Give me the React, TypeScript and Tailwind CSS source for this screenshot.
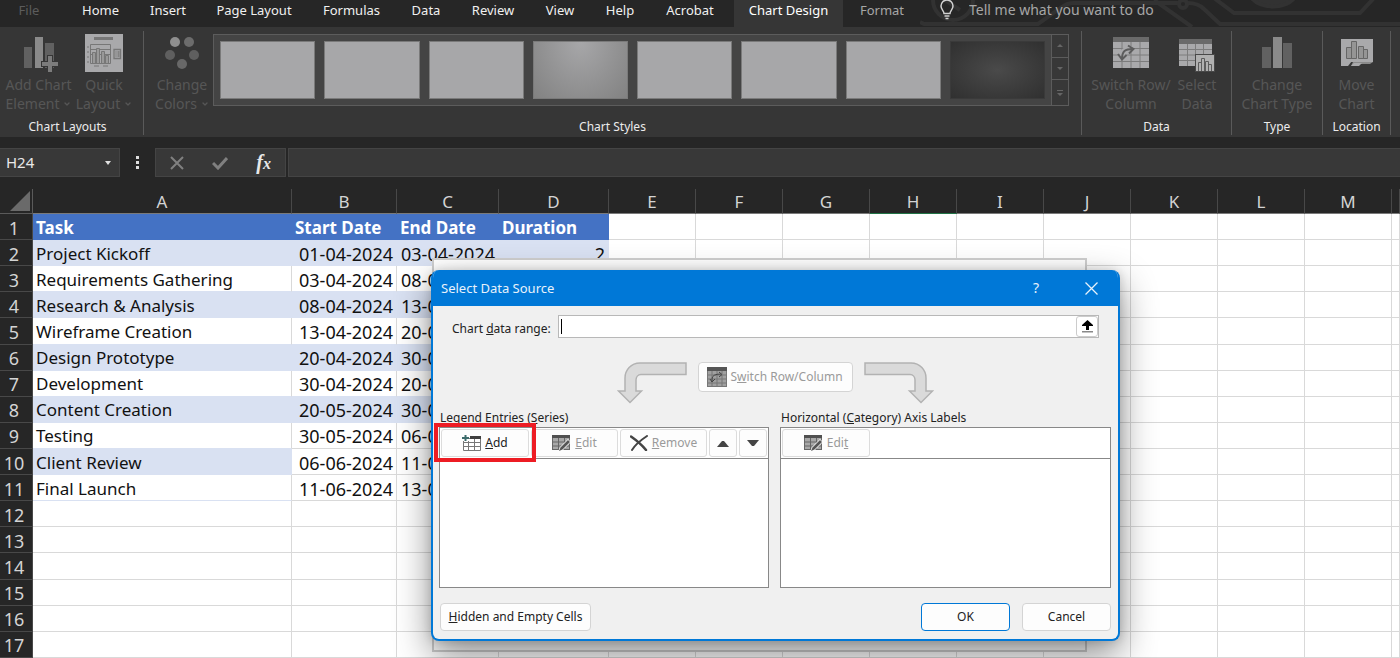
import React from 'react';
import clsx from 'clsx';
import { ChevronDown } from 'lucide-react';

const tabs = [
  { label: 'File', width: 'w-[66px] pr-2', tone: 'text-[#5c5c5c]' },
  { label: 'Home', width: 'w-[69px]', tone: 'text-[#f0f0f0]' },
  { label: 'Insert', width: 'w-[66px]', tone: 'text-[#f0f0f0]' },
  { label: 'Page Layout', width: 'w-[106px]', tone: 'text-[#f0f0f0]' },
  { label: 'Formulas', width: 'w-[89px]', tone: 'text-[#f0f0f0]' },
  { label: 'Data', width: 'w-[60px]', tone: 'text-[#f0f0f0]' },
  { label: 'Review', width: 'w-[74px]', tone: 'text-[#f0f0f0]' },
  { label: 'View', width: 'w-[60px]', tone: 'text-[#f0f0f0]' },
  { label: 'Help', width: 'w-[60px]', tone: 'text-[#f0f0f0]' },
  { label: 'Acrobat', width: 'w-[84px] pr-1', tone: 'text-[#f0f0f0]' },
  { label: 'Chart Design', width: 'w-[109px] bg-[#363636]', tone: 'text-white' },
  { label: 'Format', width: 'w-[78px]', tone: 'text-[#a6a6a6]' },
];

const columns = [
  { name: 'A', width: 'w-[259px]' },
  { name: 'B', width: 'w-[105px]' },
  { name: 'C', width: 'w-[102px]' },
  { name: 'D', width: 'w-[110px]' },
  { name: 'E', width: 'w-[87px]' },
  { name: 'F', width: 'w-[87px]' },
  { name: 'G', width: 'w-[87px]' },
  { name: 'H', width: 'w-[87px]' },
  { name: 'I', width: 'w-[87px]' },
  { name: 'J', width: 'w-[87px]' },
  { name: 'K', width: 'w-[87px]' },
  { name: 'L', width: 'w-[87px]' },
  { name: 'M', width: 'w-[87px]' },
  { name: '', width: '' },
];

const sheet = [
  ['Task', 'Start Date', 'End Date', 'Duration'],
  ['Project Kickoff', '01-04-2024', '03-04-2024', '2'],
  ['Requirements Gathering', '03-04-2024', '08-04-2024', '5'],
  ['Research & Analysis', '08-04-2024', '13-04-2024', '5'],
  ['Wireframe Creation', '13-04-2024', '20-04-2024', '7'],
  ['Design Prototype', '20-04-2024', '30-04-2024', '10'],
  ['Development', '30-04-2024', '20-05-2024', '20'],
  ['Content Creation', '20-05-2024', '30-05-2024', '10'],
  ['Testing', '30-05-2024', '06-06-2024', '7'],
  ['Client Review', '06-06-2024', '11-06-2024', '5'],
  ['Final Launch', '11-06-2024', '13-06-2024', '2'],
];

const rowNumbers = Array.from({ length: 17 }, (_, i) => i + 1);

const cellStyle = (row: number, col: number) => {
  if (row === 1 && col < 4) return 'bg-[#4472c4] border-[#4472c4] text-white text-[17px] font-bold text-left';
  const align = col > 0 ? 'text-right text-lg' : 'text-left text-[17px]';
  if (row > 11 || col > 3) return clsx(align, 'border-[#d9d9d9]');
  if (row % 2 === 0 && (row < 10 || col === 0)) return clsx(align, 'bg-[#d9e1f2] border-[#d9e1f2]');
  return clsx(align, 'border-r-[#d9d9d9]', row < 9 || col === 0 ? 'border-b-[#d9e1f2]' : 'border-b-[#d9d9d9]');
};

const AddChartIcon = () => (
  <svg width="36" height="38" viewBox="-2 0 36 38" overflow="visible">
    <path d="M1 13h8v21H1z" fill="#616161" />
    <path d="M12 3h8v31h-8z" fill="#8a8a8a" />
    <path d="M22 9h9v25h-9z" fill="#616161" />
    <path d="M24 21h6v6h6v6h-6v5h-6v-5h-6v-6h6z" fill="#363636" />
    <path d="M25 22h4v6h6v4h-6v6h-4v-6h-6v-4h6z" fill="#7c7c7c" />
  </svg>
);

const QuickLayoutIcon = () => (
  <svg width="38" height="38" viewBox="0 0 38 38" fill="none" stroke="#777" strokeWidth="1">
    <path d="M0 0h38v38H0z" fill="#a9a9ab" stroke="none" />
    <path d="M9 3h19v3H9z" fill="#777" stroke="none" />
    <path d="M5.5 10.500h20v19h-20zM5.500 15.500h20M5.500 20.500h20" />
    <path d="M7.500 18.500h3v11h-3zM11.500 14.500h3v15h-3zM16.500 17.500h3v12h-3zM20.500 21.500h3v8h-3z" fill="#999" />
    <path d="M29 15.500h6.500v9H29zM30.500 18h1m1 0h2m-4 2h1m1 0h2m-4 2h1m1 0h2" strokeWidth="1.300" />
    <path d="M2 13h2m-2 5h2m-2 5h2m-2 5h2M9 32h5m4 0h5" />
  </svg>
);

const ColorsIcon = () => (
  <svg width="36" height="38" viewBox="0 0 36 38">
    <circle cx="11" cy="8" r="5" fill="#8f8f8f" />
    <circle cx="25" cy="8" r="5" fill="#6c6c6c" />
    <circle cx="6" cy="21" r="5" fill="#5f5f5f" />
    <circle cx="30" cy="21" r="5" fill="#5f5f5f" />
    <circle cx="18" cy="30" r="5" fill="#686868" />
  </svg>
);

const SwitchIcon = () => (
  <svg width="36" height="38" viewBox="0 0 36 38">
    <path d="M0 3h36v31H0z" fill="#a9a9ab" />
    <path d="M0 3h36v5H0z" fill="#6a6a6a" />
    <path d="M0 14.500h36M0 21h36M0 27.500h36M9 8v26M18 8v26M27 8v26" stroke="#7c7c7c" />
    <path d="M9 25C9 17 12 15 20 15" stroke="#a9a9ab" strokeWidth="6" fill="none" />
    <path d="M9 25C9 17 12 15 20 15M15 11.500l5.500 3.500-4.500 4.500M5 20l4 5.500 4.500-4.500" stroke="#5c5c5c" strokeWidth="2" fill="none" />
  </svg>
);

const SelectDataIcon = () => (
  <svg width="36" height="38" viewBox="0 0 36 38">
    <path d="M0 5h33v27H0z" fill="#a9a9ab" />
    <path d="M0 5h33v5H0z" fill="#6a6a6a" />
    <path d="M0 15.500h33M0 21h33M0 26.500h33M8.500 10v22M16.500 10v22M24.500 10v22" stroke="#7c7c7c" />
    <path d="M16 20h20v18H16z" fill="#484848" />
    <path d="M17 21h18v16H17z" fill="#b0b0b0" />
    <path d="M19.500 37V28.500h3V37m0 0V24.500h3V37m1 0v-9.500h3V37m0 0v-6.500h3V37" stroke="#5c5c5c" fill="none" />
  </svg>
);

const ChartTypeIcon = () => (
  <svg width="32" height="38" viewBox="0 0 32 38">
    <path d="M1 13h9v21H1z" fill="#616161" />
    <path d="M12 3h9v31h-9z" fill="#8a8a8a" />
    <path d="M22 9h9v25h-9z" fill="#616161" />
  </svg>
);

const MoveChartIcon = () => (
  <svg width="34" height="38" viewBox="0 0 34 38">
    <path d="M1 5h32v23H1z" fill="#a9a9ab" />
    <path d="M1 27h11l-4 5H1z" fill="#a9a9ab" />
    <path d="M13 28h20l-3 2H20l-6 2-3 0z" fill="#8a8a8a" />
    <path d="M14 29h8l-3 3h-8z" fill="#a9a9ab" />
    <path d="M6.500 13.500h5v11h-5zM11.500 7.500h5v17h-5zM18.500 12.500h5v12h-5zM23.500 15.500h4v9h-4z" fill="#959595" stroke="#666" />
  </svg>
);

interface RibbonButtonProps {
  icon: React.ReactNode;
  lines: [string, string];
  menu?: boolean;
  className?: string;
}

const RibbonButton: React.FC<RibbonButtonProps> = ({ icon, lines, menu, className }) => (
  <button disabled className={clsx('flex shrink-0 flex-col items-center whitespace-nowrap text-sm leading-[19px] text-[#565656]', className)}>
    <span className="mb-[3px] flex h-[38px]">{icon}</span>
    <span>{lines[0]}</span>
    <span className="flex items-center gap-1">
      {lines[1]}
      {menu && <ChevronDown className="h-2 w-2" strokeWidth={4} />}
    </span>
  </button>
);

const RibbonGroup: React.FC<{ title: string; className: string; children: React.ReactNode }> = ({ title, className, children }) => (
  <section className={clsx('flex flex-col justify-between border-r border-[#5a5a5a]', className)}>
    <div className="flex pt-[3px]">{children}</div>
    <h2 className="text-center text-xs leading-4 text-[#ececec]">{title}</h2>
  </section>
);

const Circuit = () => (
  <svg className="absolute inset-y-0 right-0 h-[27px] w-[480px]" viewBox="0 0 480 27" fill="none" stroke="#323232" strokeWidth="4">
    <circle cx="33" cy="0" r="20" />
    <path d="M22-2l18 12M0 22l4 2h114l24-17c4-3 7-4 12-4h104M268 3c8 0 12 2 16 6l16 15h180M234 0l38 27M294-2l20 15h126l14-15" />
    <circle cx="263" cy="4" r="4" fill="#262626" />
    <path d="M330-4c10 14 36 14 46 0" fill="#323232" />
  </svg>
);

const TabBar = () => (
  <nav className="relative flex h-[27px] overflow-hidden bg-[#262626]">
    <Circuit />
    {tabs.map((tab) => (
      <button key={tab.label} className={clsx('relative h-full shrink-0 whitespace-nowrap pb-2 text-[13px] leading-5', tab.width, tab.tone)}>
        {tab.label}
      </button>
    ))}
    <label className="relative flex grow items-start gap-3 pl-4 text-sm leading-5 text-[#a6a6a6]">
      <svg width="20" height="20" viewBox="0 0 20 20" fill="none" stroke="#d0d0d0" strokeWidth="1.500">
        <path d="M7 13.500C7 11 4 9.500 4 6a6 6 0 0 1 12 0c0 3.500-3 5-3 7.500zM7.500 16h5M8.500 18.500h3" />
      </svg>
      <input className="w-60 bg-transparent outline-none placeholder:text-[#a6a6a6]" placeholder="Tell me what you want to do" aria-label="Tell me what you want to do" />
    </label>
  </nav>
);

const styleFills = [
  'bg-[#a7a7a9]',
  'bg-[#a7a7a9]',
  'bg-[#a7a7a9]',
  'bg-radial-[at_50%_0%] from-[#a7a7a9] to-[#828282]',
  'bg-[#a7a7a9]',
  'bg-[#a7a7a9]',
  'bg-[#a7a7a9]',
  'bg-radial from-[#4a4a4a] to-[#303030]',
];

const Ribbon = () => (
  <div className="flex h-[110px] bg-[#363636] pt-1 pb-[2px]">
    <RibbonGroup title="Chart Layouts" className="w-[144px] pr-2">
      <RibbonButton icon={<AddChartIcon />} lines={['Add Chart', 'Element']} menu className="w-[77px]" />
      <RibbonButton icon={<QuickLayoutIcon />} lines={['Quick', 'Layout']} menu className="w-[54px]" />
    </RibbonGroup>
    <RibbonGroup title="Chart Styles" className="min-w-0 grow">
      <RibbonButton icon={<ColorsIcon />} lines={['Change', 'Colors']} menu className="ml-[7px] w-[62px]" />
      <div className="mr-3 flex h-[72px] grow border border-[#5c5c5c] bg-[#444]">
        <div className="grid grow grid-cols-8 gap-[9px] px-[6px] py-[6px]">
          {styleFills.map((fill, i) => (
            <button key={i} aria-label={`Style ${i + 1}`} className={clsx('border', i === 7 ? 'border-[#3a3a3a]' : 'border-[#7a7a7a]', fill)} />
          ))}
        </div>
        <div className="flex w-[17px] flex-col border-l border-[#5c5c5c] bg-[#383838] text-[#666]">
          <button aria-label="Previous styles" className="flex grow items-center justify-center border-b border-[#5c5c5c]">
            <svg width="6" height="3" viewBox="0 0 6 3"><path d="M0 3l3-3 3 3z" fill="currentColor" /></svg>
          </button>
          <button aria-label="Next styles" className="flex grow items-center justify-center border-b border-[#5c5c5c]">
            <svg width="6" height="3" viewBox="0 0 6 3"><path d="M0 0l3 3 3-3z" fill="currentColor" /></svg>
          </button>
          <button aria-label="More styles" className="flex grow items-center justify-center">
            <svg width="6" height="6" viewBox="0 0 6 6"><path d="M0 3l3 3 3-3zM0 0h6v1H0z" fill="currentColor" /></svg>
          </button>
        </div>
      </div>
    </RibbonGroup>
    <RibbonGroup title="Data" className="w-[150px] shrink-0">
      <RibbonButton icon={<SwitchIcon />} lines={['Switch Row/', 'Column']} className="ml-[7px] w-[84px]" />
      <RibbonButton icon={<SelectDataIcon />} lines={['Select', 'Data']} className="w-[48px]" />
    </RibbonGroup>
    <RibbonGroup title="Type" className="w-[91px] shrink-0">
      <RibbonButton icon={<ChartTypeIcon />} lines={['Change', 'Chart Type']} className="w-full" />
    </RibbonGroup>
    <RibbonGroup title="Location" className="w-[68px] shrink-0">
      <RibbonButton icon={<MoveChartIcon />} lines={['Move', 'Chart']} className="w-full" />
    </RibbonGroup>
    <div className="w-[9px] shrink-0" />
  </div>
);

const FormulaBar = () => (
  <div className="flex h-[52px] bg-[#262626] pt-[11px] pb-3">
    <div className="flex w-[120px] shrink-0 items-center justify-between border border-l-0 border-[#444] bg-[#383838] pr-2 pl-[6px]">
      <input aria-label="Name box" defaultValue="H24" className="w-20 bg-transparent text-[15px] text-[#e8e8e8] outline-none" />
      <svg width="6" height="4" viewBox="0 0 6 4"><path d="M0 0h6L3 4z" fill="#e0e0e0" /></svg>
    </div>
    <div className="flex w-[35px] shrink-0 items-center justify-center">
      <svg width="3" height="13" viewBox="0 0 3 13"><path d="M0 0h3v3H0zM0 5h3v3H0zM0 10h3v3H0z" fill="#ddd" /></svg>
    </div>
    <div className="flex w-[131px] shrink-0 items-center justify-between border border-[#444] bg-[#383838] px-[14px]">
      <button aria-label="Cancel entry">
        <svg width="14" height="14" viewBox="0 0 14 14" fill="none" stroke="#808080" strokeWidth="2"><path d="M1 1l12 12M13 1L1 13" /></svg>
      </button>
      <button aria-label="Accept entry">
        <svg width="16" height="14" viewBox="0 0 16 14" fill="none" stroke="#808080" strokeWidth="3"><path d="M1 7l5 5 9-10" /></svg>
      </button>
      <button aria-label="Insert function" className="font-['Liberation_Serif',serif] text-xl leading-6 font-bold text-[#e8e8e8] italic">
        f<span className="text-base">x</span>
      </button>
    </div>
    <input aria-label="Formula bar" className="ml-[2px] min-w-0 grow border border-r-0 border-[#444] bg-[#383838] px-2 text-white outline-none" />
  </div>
);

const Sheet = () => (
  <div className="min-h-0 grow">
    <table className="h-full w-full table-fixed border-separate border-spacing-0 bg-white text-[17px] leading-5 text-[#111]">
      <thead>
        <tr className="h-[25px] bg-[#262626] text-[#d4d4d4]">
          <th className="w-[33px] border-r border-b border-[#5a5a5a] p-0">
            <svg className="ml-[10px]" width="20" height="20" viewBox="0 0 20 20"><path d="M20 0v20H0z" fill="#6a6a6a" /></svg>
          </th>
          {columns.map((col, i) => (
            <th key={i} className={clsx('border-r border-b border-r-[#484848] p-0 pt-[2px] font-normal', col.width, col.name === 'H' ? 'border-b-[#217346]' : 'border-b-[#7a7a7a]')}>
              {col.name}
            </th>
          ))}
        </tr>
      </thead>
      <tbody>
        {rowNumbers.map((row) => (
          <tr key={row}>
            <th className="border-r border-b border-[#484848] bg-[#262626] p-0 pt-[2px] pr-1 text-lg leading-5 font-normal text-[#d4d4d4]">{row}</th>
            {columns.map((_, c) => (
              <td key={c} className={clsx('border-r border-b px-[3px] pt-[2px] pb-0 leading-5 whitespace-nowrap', cellStyle(row, c))}>
                {sheet[row - 1]?.[c]}
              </td>
            ))}
          </tr>
        ))}
      </tbody>
    </table>
  </div>
);

const EditIcon = () => (
  <svg width="19" height="18" viewBox="0 0 19 18">
    <path d="M0 1h18v15H0z" fill="#a8a8a8" />
    <path d="M0 1h18v3H0z" fill="#505050" />
    <path d="M.5 4v12M6.500 4v12M12.500 4v12M17.500 4v12M0 8h18M0 12h18M0 15.500h18" stroke="#666" />
    <path d="M6 18l2-5 8-8 3 3-8 8z" fill="#fdfdfd" />
    <path d="M7 17l1.500-3.500L16 6l2 2-7.500 7.500z" fill="#555" />
  </svg>
);

const AddIcon = () => (
  <svg width="19" height="18" viewBox="0 0 19 18">
    <path d="M1.500 4.500h17v12h-17zM1 8.500h17M1 12.500h17M6.500 4v12M12.500 4v12" fill="#fff" stroke="#777" />
    <path d="M8 2h11v3H8z" fill="#404040" />
    <path d="M0 0h7v7H0z" fill="#fdfdfd" />
    <path d="M3.500 1v6M0 4h7" stroke="#3c6b6b" strokeWidth="2" />
  </svg>
);

const SwitchSmallIcon = () => (
  <svg width="20" height="20" viewBox="0 0 20 20">
    <path d="M0 0h20v20H0z" fill="#a0a0a0" />
    <path d="M0 0h20v4H0z" fill="#555" />
    <path d="M.5 4v16M5 4v16M10 4v16M15 4v16M19.500 4v16M0 8h20M0 12h20M0 16h20M0 19.500h20" stroke="#777" />
    <path d="M5 15V12q0-5 9-5M12 5l3 2.500-3 2.500M3 12l2 3 3-3" stroke="#444" fill="none" />
  </svg>
);

const BentArrow: React.FC<{ className?: string }> = ({ className }) => (
  <svg className={className} width="70" height="42" viewBox="0 0 70 42">
    <path d="M1 1h46c9 0 15 7 15 15v13h6.500L57 40.500 45.500 29H51V18c0-3-2-5.500-5-5.500H1z" fill="#dadada" stroke="#b2b2b2" strokeWidth="1.500" />
  </svg>
);

const toolButton = 'flex h-7 shrink-0 items-center justify-center rounded-[3px] border border-[#dcdcdc] bg-[#fdfdfd]';
const pushButton = 'flex h-7 items-center justify-center rounded border border-[#d4d4d4] bg-[#fdfdfd]';

const SelectDataDialog = () => (
  <div
    role="dialog"
    aria-label="Select Data Source"
    className="absolute top-[270px] left-[431px] flex h-[371px] w-[689px] flex-col overflow-hidden rounded-lg border-2 border-t-0 border-[#0078d7] bg-[#f0f0f0] text-xs text-[#222] shadow-[0_14px_36px_rgba(0,0,0,0.45),0_0_10px_rgba(0,0,0,0.15)]"
  >
    <header className="flex h-9 shrink-0 items-center bg-[#0078d7] pl-2 text-sm text-[#e8f2fb]">
      <h1 className="grow text-[13px]">Select Data Source</h1>
      <button className="w-14 text-sm" aria-label="Help">?</button>
      <button className="flex w-[54px] justify-center" aria-label="Close">
        <svg width="13" height="13" viewBox="0 0 13 13" stroke="#e8f2fb" strokeWidth="1.300"><path d="M.5.5l12 12M12.500.5l-12 12" /></svg>
      </button>
    </header>
    <div className="flex grow flex-col pt-[9px] pr-[7px] pb-2 pl-[6px]">
      <div className="flex items-center pr-3 pl-[13px]">
        <label htmlFor="range" className="w-[106px] shrink-0 pt-1">
          Chart <u>d</u>ata range:
        </label>
        <div className="flex h-[23px] grow border border-[#b8b8b8] bg-white">
          <span className="my-[3px] ml-[2px] w-px bg-black" />
          <input id="range" className="min-w-0 grow outline-none" />
          <button aria-label="Collapse dialog" className="flex w-[22px] items-center justify-center rounded-[3px] border border-[#ccc]">
            <svg width="11" height="13" viewBox="0 0 11 13"><path d="M5.500 0L11 5v1H7v4H4V6H0V5z" fill="#000" /><path d="M0 11h11v1.500H0z" fill="#888" /></svg>
          </button>
        </div>
      </div>
      <div className="mt-6 flex h-[42px] justify-center">
        <BentArrow className="-scale-x-100" />
        <button disabled className="mx-[11px] flex h-[30px] w-[155px] items-center justify-center gap-[3px] rounded border border-[#d4d4d4] bg-[#fdfdfd] text-[#9a9a9a]">
          <SwitchSmallIcon />
          <span>S<u>w</u>itch Row/Column</span>
        </button>
        <BentArrow />
      </div>
      <div className="mt-1 flex gap-[11px]">
        <section className="w-[330px]">
          <h2 className="h-[19px] pt-px pl-px leading-[18px]">Legend Entries (<u>S</u>eries)</h2>
          <div className="h-[161px] border border-[#888] bg-white">
            <div className="flex h-[31px] gap-[2px] border-b border-[#888] p-px">
              <div className="relative">
                <button className={clsx(toolButton, 'w-[88px] gap-1')}>
                  <AddIcon />
                  <span><u>A</u>dd</span>
                </button>
                <span className="pointer-events-none absolute -top-[6px] -left-[7px] h-[39px] w-[102px] border-4 border-[#ed1c24]" />
              </div>
              <button disabled className={clsx(toolButton, 'w-[87px] gap-1 text-[#9a9a9a]')}>
                <EditIcon />
                <span><u>E</u>dit</span>
              </button>
              <button disabled className={clsx(toolButton, 'w-[87px] gap-1 text-[#9a9a9a]')}>
                <svg width="18" height="16" viewBox="0 0 18 16" fill="none" stroke="#444" strokeLinecap="round">
                  <path d="M1 1.500C6 5 12 10 16 15" strokeWidth="2.500" />
                  <path d="M17 1C11 5 5 10 2 15" strokeWidth="2" />
                </svg>
                <span><u>R</u>emove</span>
              </button>
              <button aria-label="Move up" className={clsx(toolButton, 'w-7')}>
                <svg width="12" height="7" viewBox="0 0 12 7"><path d="M0 7l5-6h2l5 6z" fill="#444" /></svg>
              </button>
              <button aria-label="Move down" className={clsx(toolButton, 'w-7')}>
                <svg width="12" height="7" viewBox="0 0 12 7"><path d="M0 0l5 6h2l5-6z" fill="#444" /></svg>
              </button>
            </div>
          </div>
        </section>
        <section className="grow">
          <h2 className="h-[19px] pt-px pl-px leading-[18px]">Horizontal (<u>C</u>ategory) Axis Labels</h2>
          <div className="h-[161px] border border-[#888] bg-white">
            <div className="flex h-[31px] border-b border-[#888] p-px">
              <button disabled className={clsx(toolButton, 'w-[88px] gap-1 text-[#9a9a9a]')}>
                <EditIcon />
                <span>Edi<u>t</u></span>
              </button>
            </div>
          </div>
        </section>
      </div>
      <footer className="mt-auto flex gap-3">
        <button className={clsx(pushButton, 'ml-px mr-auto w-[151px]')}>
          <span><u>H</u>idden and Empty Cells</span>
        </button>
        <button className="flex h-7 w-[89px] items-center justify-center rounded border border-[#0078d7] bg-[#fdfdfd]">OK</button>
        <button className={clsx(pushButton, 'w-[89px]')}>Cancel</button>
      </footer>
    </div>
  </div>
);

export default function App() {
  return (
    <div className="relative flex h-screen min-h-[658px] flex-col overflow-hidden bg-[#262626] font-['Noto_Sans',sans-serif]">
      <TabBar />
      <Ribbon />
      <FormulaBar />
      <Sheet />
      {/* empty chart area under the dialog */}
      <div className="absolute top-[258px] left-[432px] h-[394px] w-[655px] border-2 border-[#cfcfcf] bg-white" />
      <SelectDataDialog />
    </div>
  );
}
